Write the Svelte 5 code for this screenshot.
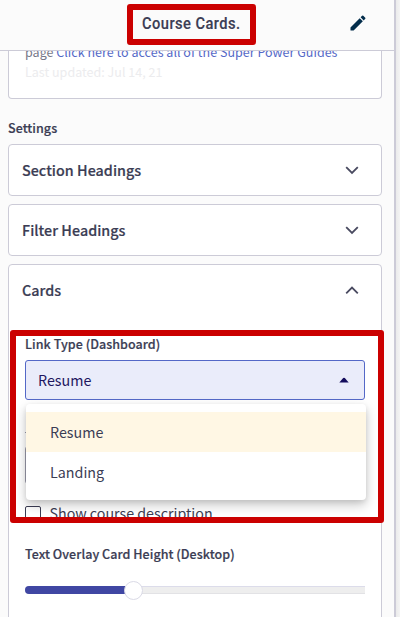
<script>
  const sections = ['Section Headings', 'Filter Headings'];
  const options = ['Resume', 'Landing'];
  let selected = $state('Resume');
  let height = $state(32);
</script>

<div class="screen">
  <aside class="sidebar">
    <header>
      <h1>Course Cards.</h1>
      <svg class="pencil" viewBox="0 0 24 24" aria-hidden="true">
        <path d="M3 17.25V21h3.75L17.8 9.94l-3.75-3.75L3 17.25zM20.7 7.04a1 1 0 0 0 0-1.41l-2.34-2.34a1 1 0 0 0-1.41 0l-1.83 1.83 3.75 3.75 1.83-1.83z" />
      </svg>
      <div class="mark title-mark"></div>
    </header>

    <main>
      <section class="info">
        <p class="about">page <a href="#guides">Click here to acces all of the Super Power Guides</a></p>
        <p class="updated">Last updated: Jul 14, 21</p>
      </section>

      <h2>Settings</h2>

      {#each sections as name}
        <section class="panel">
          <button class="head"><span>{name}</span>
            <svg class="chevron" viewBox="0 0 14 9"><path d="M1.2 1.2 L7 7 L12.8 1.2" /></svg>
          </button>
        </section>
      {/each}

      <section class="panel open">
        <button class="head"><span>Cards</span>
          <svg class="chevron" viewBox="0 0 14 9"><path d="M1.2 7.4 L7 1.6 L12.8 7.4" /></svg>
        </button>
        <div class="body">
          <div class="label link-label">Link Type (Dashboard)</div>
          <div class="select">
            <span>{selected}</span>
            <svg class="caret" viewBox="0 0 10 6"><path d="M0.3 5.5 L4.2 1.1 Q5 0.3 5.8 1.1 L9.7 5.5 Z" /></svg>
            <div class="menu">
              {#each options as option}
                <button class="option" class:active={option === selected} onclick={() => (selected = option)}>{option}</button>
              {/each}
            </div>
          </div>
          <div class="tick"></div>
          <div class="covered"></div>
          <label class="check"><i></i><span>Show course description</span></label>
          <div class="label height-label">Text Overlay Card Height (Desktop)</div>
          <div class="slider">
            <div class="fill" style="width: {height}%"></div>
            <div class="thumb"></div>
          </div>
        </div>
        <div class="mark link-mark"></div>
      </section>
    </main>
  </aside>
</div>

<style>
  :global(body) { margin: 0; background: #f0f0f1; }
  * { box-sizing: border-box; }
  .screen {
    height: 617px;
    overflow: hidden;
    background: linear-gradient(90deg, #ebebeb 396px, #f4f4f4 400px);
    font-family: "Noto Sans CJK SC", "Noto Sans", sans-serif;
    color: #3b3d54;
  }
  .sidebar {
    width: 396px;
    height: 617px;
    overflow: hidden;
    background: #fbfbfb;
    border-right: 2px solid #cccbd7;
  }
  header {
    position: relative;
    height: 51px;
    display: flex;
    align-items: center;
    padding: 0 26px 4px 142px;
    justify-content: space-between;
    background: #fbfbfb;
    border-bottom: 1px solid #cccbd7;
    z-index: 2;
  }
  h1 {
    margin: 2px 0 0;
    font: 500 16.5px/24px Roboto, sans-serif;
    letter-spacing: .5px;
    white-space: nowrap;
    transform: scaleX(.89);
    transform-origin: left;
    -webkit-text-stroke: .15px;
  }
  .pencil { width: 20px; height: 20px; fill: #032d4b; }
  .mark { position: absolute; border: 6px solid #cb0000; border-radius: 3px; pointer-events: none; }
  .title-mark { left: 127px; top: 4px; width: 129px; height: 41px; }
  main { padding: 0 12px 0 8px; }
  .info {
    display: flow-root;
    height: 48px;
    background: #fff;
    border: 1px solid #cccbd7;
    border-top: 0;
    border-radius: 0 0 4px 4px;
    padding: 0 16px;
    font-size: 12.5px;
    line-height: 20px;
    letter-spacing: .02px;
    white-space: nowrap;
  }
  .info p { margin: 0; }
  .info .about { margin-top: -9px; color: #777889; }
  .info a { color: #5468c7; text-decoration: none; }
  .updated { color: #ececee; }
  h2 { margin: 19px 0 6px; font-size: 12.5px; line-height: 20px; font-weight: 500; letter-spacing: .05px; -webkit-text-stroke: .2px; }
  .panel {
    height: 52px;
    margin-bottom: 8px;
    background: #fff;
    border: 1px solid #cccbd7;
    border-radius: 4px;
  }
  button { font: inherit; color: inherit; border: 0; background: none; text-align: left; }
  .head {
    width: 100%;
    height: 50px;
    display: flex;
    align-items: center;
    justify-content: space-between;
    padding: 0 22px 0 13px;
    font-size: 14.3px;
    font-weight: 500;
    line-height: 22px;
    letter-spacing: .04px;
    -webkit-text-stroke: .2px;
  }
  .chevron { width: 14px; height: 9px; fill: none; stroke: #494a60; stroke-width: 1.8; }
  .open { position: relative; height: 370px; }
  .body { padding: 19px 16px 0; }
  .label { font-size: 12.5px; line-height: 20px; font-weight: 500; white-space: nowrap; letter-spacing: .05px; -webkit-text-stroke: .2px; }
  .select {
    position: relative;
    height: 40px;
    margin-top: 6px;
    display: flex;
    align-items: center;
    justify-content: space-between;
    padding: 0 15px 0 12px;
    background: #eaecfa;
    border: 1px solid #5468c7;
    border-radius: 3px;
    color: #1e165f;
    font-size: 14.3px;
    line-height: 20px;
  }
  .caret { width: 10px; height: 6px; fill: #140c5c; }
  .menu {
    position: absolute;
    left: 0;
    top: 43px;
    width: 340px;
    height: 96px;
    padding: 8px 0;
    background: #fff;
    border-radius: 4px;
    box-shadow: 0 5px 12px rgba(0, 0, 0, .22), 0 2px 5px rgba(0, 0, 0, .08);
    color: #3b3d54;
    z-index: 1;
  }
  .option { display: block; width: 100%; height: 40px; padding: 0 24px; font-size: 14.3px; line-height: 40px; }
  .active { background: #fff7e4; }
  .tick { width: 8px; height: 1px; margin-top: 32px; background: #9999a9; }
  .covered { height: 38px; margin-top: 13px; border: 1px solid #9999a9; border-radius: 3px; }
  .check { display: flex; gap: 8.5px; height: 20px; margin-top: 19px; font-size: 14.25px; line-height: 20px; }
  .check i { width: 16px; height: 16px; margin-top: 3px; border: 1px solid #3b3d54; border-radius: 2px; }
  .height-label { margin-top: 21px; }
  .slider {
    display: flex;
    align-items: center;
    height: 8px;
    margin-top: 22px;
    background: #eee;
    border-top: 1px solid #dcdcea;
    border-bottom: 1px solid #e2e2e5;
    border-radius: 4px 0 0 4px;
  }
  .fill { height: 8px; flex: none; background: #4047a3; border-radius: 4px 0 0 4px; }
  .thumb { width: 19px; height: 19px; flex: none; margin-left: -10px; background: #fff; border: 1px solid #dadae6; border-radius: 50%; }
  .link-mark { left: 1px; top: 65px; width: 374px; height: 193px; z-index: 2; }
</style>
